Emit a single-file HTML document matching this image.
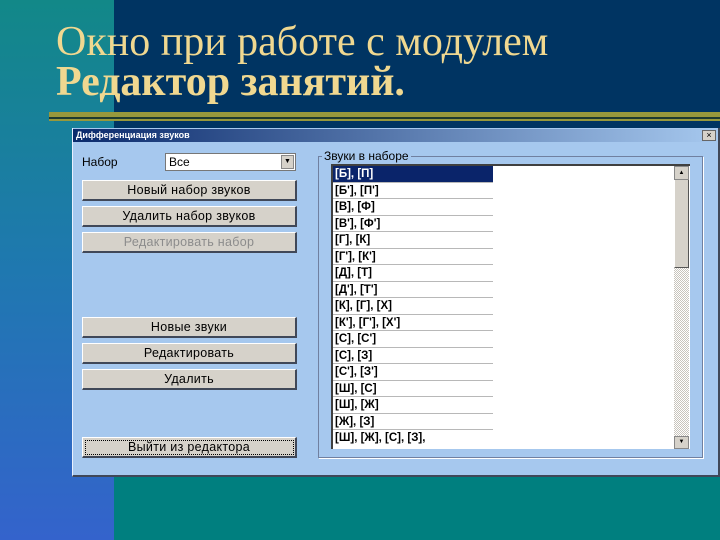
<!DOCTYPE html><html><head><meta charset="utf-8"><style>
*{margin:0;padding:0;box-sizing:border-box}
body{width:720px;height:540px;position:relative;overflow:hidden;background:#007f7f;font-family:"Liberation Sans",sans-serif}
.a{position:absolute}
.t{font-family:"Liberation Serif",serif;color:#f0d890;font-size:42px;line-height:42px;white-space:nowrap}
.btn{position:absolute;left:82px;width:215px;height:21px;background:#d6d2ca;border-top:1px solid #fff;border-left:1px solid #fff;border-right:2px solid #404858;border-bottom:2px solid #404858;font-size:12.5px;text-align:center;line-height:18px;color:#000;letter-spacing:.3px}
.row{height:16.5px;font-size:11.5px;font-weight:bold;line-height:16px;padding-left:2px;border-bottom:1px solid #b8b8b8;width:160px;color:#000}
</style></head><body>
<div class="a" style="left:114px;top:0;width:606px;height:330px;background:#003462"></div>
<div class="a" style="left:0;top:0;width:114px;height:540px;background:linear-gradient(#128888,#1f78b0 50%,#3463cc)"></div>
<div class="a t" style="left:56px;top:21px">Окно при работе с модулем</div>
<div class="a t" style="left:56px;top:61px;font-weight:bold">Редактор занятий.</div>
<div class="a" style="left:49px;top:112px;width:671px;height:5px;background:#98983c"></div>
<div class="a" style="left:49px;top:117px;width:671px;height:2px;background:#1e3a30"></div>
<div class="a" style="left:49px;top:119px;width:671px;height:2px;background:#98983c"></div>
<div class="a" style="left:72px;top:128px;width:648px;height:349px;background:#a6c8ee;border-right:2px solid #404858;border-bottom:2px solid #404858;border-left:1px solid #e8f0ff"></div>
<div class="a" style="left:73px;top:129px;width:645px;height:13px;background:linear-gradient(90deg,#0a2a6c,#a6c8ee);color:#fff;font-size:9px;font-weight:bold;line-height:13px;padding-left:3px">Дифференциация звуков</div>
<div class="a" style="left:702px;top:130px;width:14px;height:11px;background:#d6d2ca;border:1px solid #666;font-size:9px;line-height:9px;text-align:center">×</div>
<div class="a" style="left:82px;top:155px;font-size:12px">Набор</div>
<div class="a" style="left:165px;top:153px;width:131px;height:18px;background:#fff;border:1px solid #777;font-size:12px;line-height:16px;padding-left:3px">Все</div>
<div class="a" style="left:281px;top:155px;width:13px;height:14px;background:#d6d2ca;border:1px solid #888;font-size:7px;text-align:center;line-height:12px">▼</div>
<div class="btn" style="top:180px">Новый набор звуков</div>
<div class="btn" style="top:206px">Удалить набор звуков</div>
<div class="btn" style="top:232px;color:#8c8c8c">Редактировать набор</div>
<div class="btn" style="top:317px">Новые звуки</div>
<div class="btn" style="top:343px">Редактировать</div>
<div class="btn" style="top:369px">Удалить</div>
<div class="btn" style="top:437px;outline:1px dotted #000;outline-offset:-4px">Выйти из редактора</div>
<div class="a" style="left:318px;top:156px;width:385px;height:302px;border:1px solid #7080a0;box-shadow:1px 1px 0 #fff"></div>
<div class="a" style="left:322px;top:149px;font-size:12px;background:#a6c8ee;padding:0 2px">Звуки в наборе</div>
<div class="a" style="left:331px;top:164px;width:359px;height:285px;background:#fff;border-top:2px solid #404040;border-left:2px solid #404040"></div>
<div class="a" style="left:333px;top:166px">
<div class="row" style="background:#0a246a;color:#fff">[Б], [П]</div>
<div class="row">[Б'], [П']</div><div class="row">[В], [Ф]</div><div class="row">[В'], [Ф']</div>
<div class="row">[Г], [К]</div><div class="row">[Г'], [К']</div><div class="row">[Д], [Т]</div>
<div class="row">[Д'], [Т']</div><div class="row">[К], [Г], [Х]</div><div class="row">[К'], [Г'], [Х']</div>
<div class="row">[С], [С']</div><div class="row">[С], [З]</div><div class="row">[С'], [З']</div>
<div class="row">[Ш], [С]</div><div class="row">[Ш], [Ж]</div><div class="row">[Ж], [З]</div>
<div class="row" style="border:none">[Ш], [Ж], [С], [З],</div></div>
<div class="a" style="left:674px;top:166px;width:15px;height:283px;background:repeating-conic-gradient(#fff 0 25%,#c8c4bc 0 50%) 0 0/2px 2px"></div>
<div class="a" style="left:674px;top:166px;width:15px;height:14px;background:#d6d2ca;border:1px solid #888;font-size:6px;text-align:center;line-height:12px">▲</div>
<div class="a" style="left:674px;top:180px;width:15px;height:88px;background:#d6d2ca;border-right:1px solid #555;border-bottom:1px solid #555;border-left:1px solid #fff"></div>
<div class="a" style="left:674px;top:436px;width:15px;height:13px;background:#d6d2ca;border:1px solid #888;font-size:6px;text-align:center;line-height:11px">▼</div>
</body></html>
